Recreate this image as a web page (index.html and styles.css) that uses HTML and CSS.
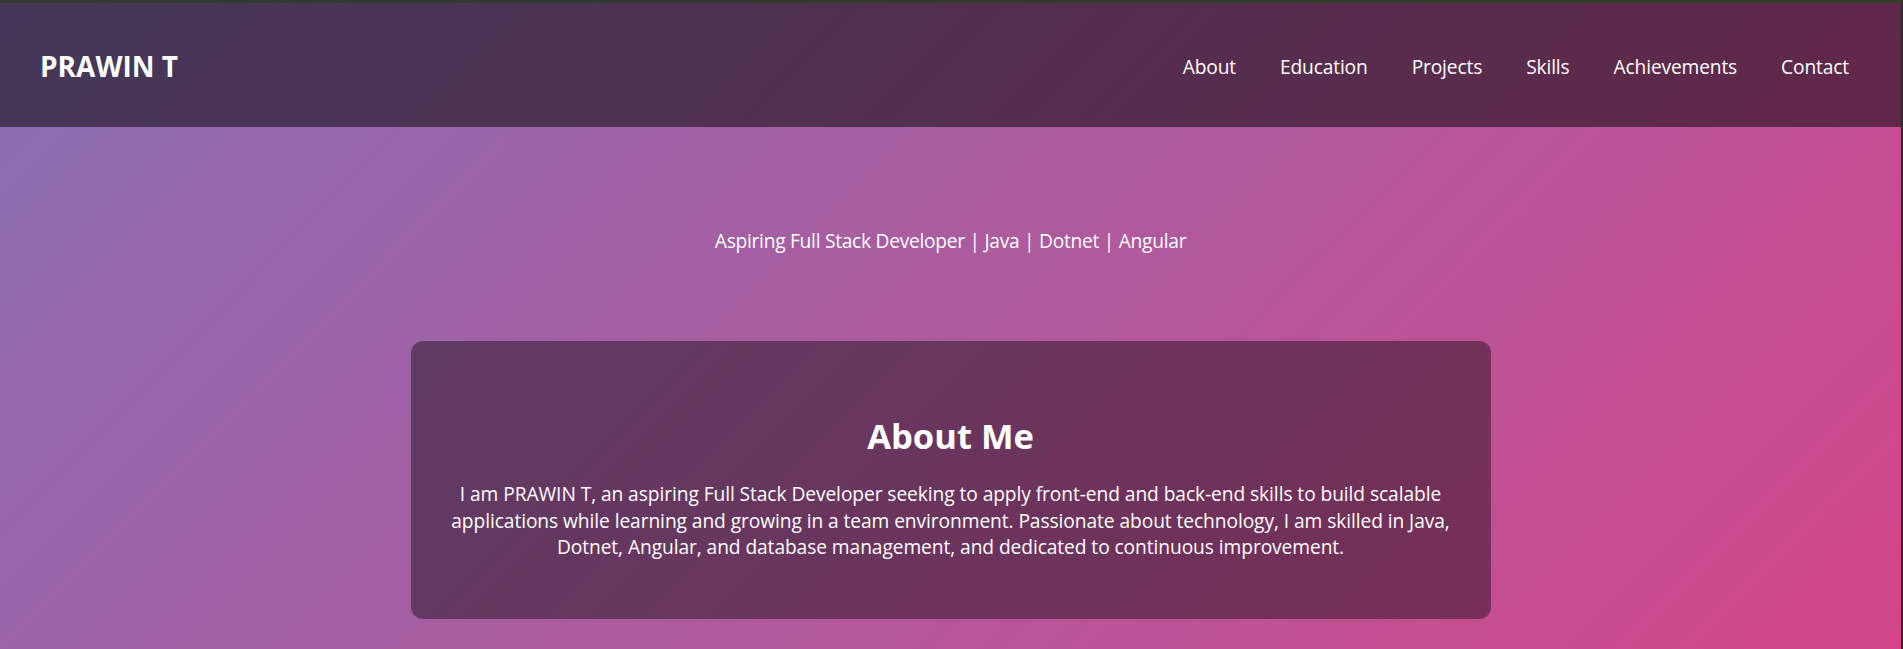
FILE: index.html
```html
<!DOCTYPE html>
<html lang="en">
<head>
<meta charset="utf-8">
<title>PRAWIN T</title>
<link rel="stylesheet" href="styles.css">
</head>
<body>
<header class="site-header">
  <div class="logo">PRAWIN T</div>
  <nav class="nav">
    <a href="#about">About</a>
    <a href="#education">Education</a>
    <a href="#projects">Projects</a>
    <a href="#skills">Skills</a>
    <a href="#achievements">Achievements</a>
    <a href="#contact">Contact</a>
  </nav>
</header>
<main class="main">
  <p class="tagline">Aspiring Full Stack Developer | Java | Dotnet | Angular</p>
  <section class="card" id="about">
    <h2 class="card-title">About Me</h2>
    <p class="card-text">I am PRAWIN T, an aspiring Full Stack Developer seeking to apply front-end and back-end skills to build scalable applications while learning and growing in a team environment. Passionate about technology, I am skilled in Java, Dotnet, Angular, and database management, and dedicated to continuous improvement.</p>
  </section>
</main>
</body>
</html>
```
FILE: styles.css
```css
html, body {
  margin: 0;
  padding: 0;
}
body {
  min-height: 100vh;
  box-sizing: border-box;
  border-top: 3px solid #333d2d;
  border-right: 2px solid #2b2b2b;
  font-family: "Open Sans", "Liberation Sans", sans-serif;
  color: #ffffff;
  background: linear-gradient(135deg, #886fb2 0%, #d2468a 100%) fixed;
}
.site-header {
  height: 124px;
  box-sizing: border-box;
  padding: 2px 52px 0 40px;
  display: flex;
  align-items: center;
  justify-content: space-between;
  background: rgba(0, 0, 0, 0.5);
}
.logo {
  font-size: 28px;
  font-weight: 700;
}
.nav {
  display: flex;
  gap: 44px;
}
.nav a {
  color: #ffffff;
  text-decoration: none;
  font-size: 19.2px;
  letter-spacing: -0.15px;
}
.main {
  padding-top: 101px;
}
.tagline {
  margin: 0;
  text-align: center;
  font-size: 19.2px;
  line-height: 26px;
  letter-spacing: -0.28px;
}
.card {
  width: 1080px;
  box-sizing: border-box;
  margin: 87px auto 0;
  padding: 38.4px;
  border-radius: 12px;
  background: rgba(0, 0, 0, 0.4);
  text-align: center;
}
.card-title {
  margin: 36px 0 24px;
  font-size: 34.56px;
  line-height: 41.5px;
  font-weight: 700;
}
.card-text {
  margin: 0 0 19.2px;
  font-size: 19.2px;
  line-height: 26.7px;
  letter-spacing: -0.08px;
}
```
